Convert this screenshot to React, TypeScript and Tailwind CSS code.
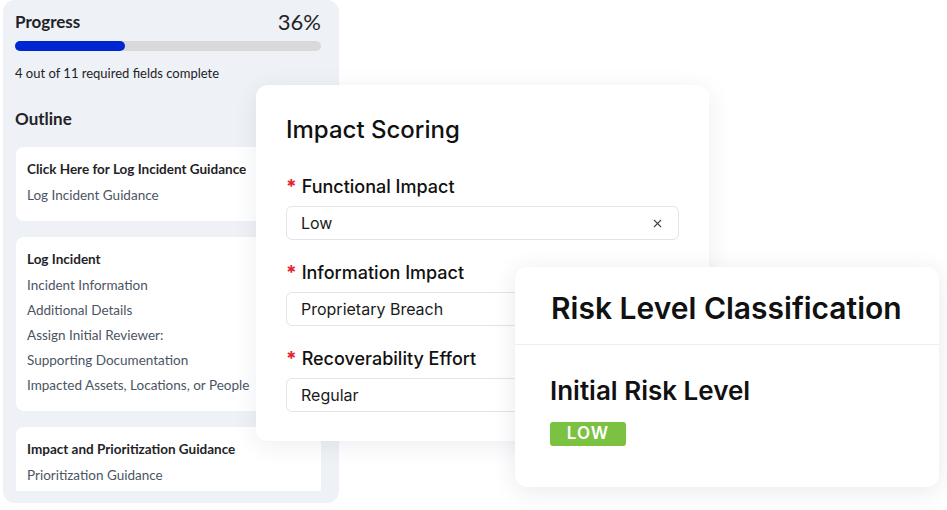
import { X } from "lucide-react";

const leftFont = { fontFamily: "Lato, 'Open Sans', sans-serif" };

const outline = [
  { title: "Click Here for Log Incident Guidance", items: ["Log Incident Guidance"] },
  {
    title: "Log Incident",
    items: [
      "Incident Information",
      "Additional Details",
      "Assign Initial Reviewer:",
      "Supporting Documentation",
      "Impacted Assets, Locations, or People",
    ],
  },
  { title: "Impact and Prioritization Guidance", items: ["Prioritization Guidance"] },
];

const fields = [
  { label: "Functional Impact", value: "Low", clear: true },
  { label: "Information Impact", value: "Proprietary Breach" },
  { label: "Recoverability Effort", value: "Regular" },
];

function ProgressPanel() {
  return (
    <div className="absolute left-[3px] top-0 w-[336px] h-[503px] rounded-xl bg-[#eef1f5] overflow-hidden" style={leftFont}>
      <div className="pl-3 pr-[18px] pt-[8px]">
        <div className="h-[28px] flex items-center justify-between">
          <span className="text-[17px] font-bold text-[#1f2328] leading-[28px]">Progress</span>
          <span className="text-[22px] text-[#1f2328] leading-[28px]">36%</span>
        </div>
        <div className="mt-[5px] h-[10px] rounded-full bg-[#d9d9d9]">
          <div className="h-full w-[110px] rounded-full bg-[#0026d1]" />
        </div>
        <p className="mt-[13px] text-[13px] leading-[18px] text-[#1f2328]">4 out of 11 required fields complete</p>
        <h3 className="mt-[25px] text-[17px] font-bold leading-[24px] text-[#1f2328]">Outline</h3>
      </div>
      <div className="mt-[16px] ml-[13px] w-[305px] h-[344px] overflow-hidden flex flex-col gap-4">
        {outline.map((s) => (
          <div key={s.title} className="shrink-0 rounded-lg bg-white px-[11px] pt-[12px] pb-[16px]">
            <p className="text-[13.5px] font-bold text-[#1f2328] leading-[20px]">{s.title}</p>
            <div className="mt-[6px] flex flex-col gap-[5px]">
              {s.items.map((i) => (
                <p key={i} className="text-[13.5px] text-[#4b5563] leading-[20px]">{i}</p>
              ))}
            </div>
          </div>
        ))}
      </div>
    </div>
  );
}

function ImpactCard() {
  return (
    <div
      className="absolute left-[256px] top-[85px] w-[453px] h-[356px] rounded-xl bg-white px-[30px] pt-[28px] shadow-[0_4px_24px_rgba(30,40,80,0.08)]"
      style={{ fontFamily: "Inter, sans-serif" }}
    >
      <h2 className="text-[24px] font-medium text-[#111] leading-[34px]">Impact Scoring</h2>
      <div className="mt-[28px] flex flex-col gap-[21px]">
        {fields.map((f) => (
          <div key={f.label}>
            <div className="flex items-center gap-[5px] text-[18px] font-medium text-[#111] leading-[24px]">
              <span className="text-[#e5202a] text-[19px] font-bold">*</span>
              {f.label}
            </div>
            <div className="mt-[7px] h-[34px] rounded-md border border-[#e4e4e7] px-[14px] flex items-center justify-between text-[16px] text-[#1a1a1a]">
              <span>{f.value}</span>
              {f.clear && <X className="w-[13px] h-[13px] text-[#444]" strokeWidth={2} />}
            </div>
          </div>
        ))}
      </div>
    </div>
  );
}

function RiskCard() {
  return (
    <div
      className="absolute left-[515px] top-[267px] w-[424px] h-[220px] rounded-xl bg-white shadow-[0_4px_24px_rgba(30,40,80,0.10)]"
      style={{ fontFamily: "Inter, sans-serif" }}
    >
      <div className="h-[78px] pt-[6px] flex items-center px-[36px] border-b border-[#eeeff2]">
        <h2 className="whitespace-nowrap text-[30px] font-semibold text-[#111]">Risk Level Classification</h2>
      </div>
      <div className="px-[35px] pt-[30px]">
        <h3 className="text-[26px] font-semibold text-[#111] leading-[32px]">Initial Risk Level</h3>
        <span className="mt-[15px] inline-flex items-center justify-center w-[76px] h-[24px] rounded-[3px] bg-[#7cc242] text-white text-[17px] font-semibold tracking-[1px]">
          LOW
        </span>
      </div>
    </div>
  );
}

export default function App() {
  return (
    <div className="relative w-[947px] h-[510px] bg-white overflow-hidden">
      <ProgressPanel />
      <ImpactCard />
      <RiskCard />
    </div>
  );
}
